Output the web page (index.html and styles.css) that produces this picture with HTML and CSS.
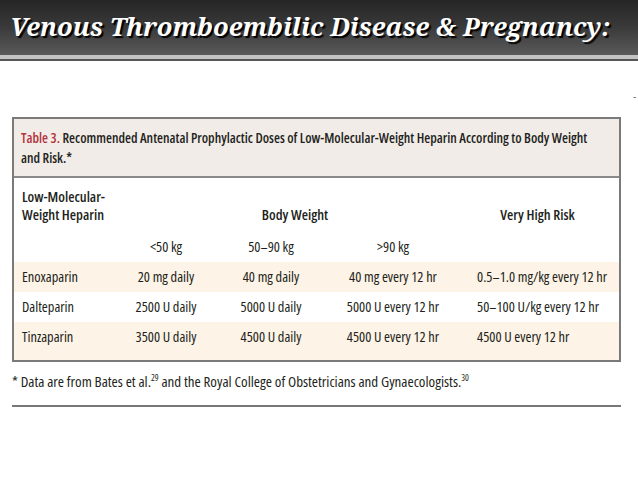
FILE: index.html
```html
<!DOCTYPE html>
<html>
<head>
<meta charset="utf-8">
<link rel="stylesheet" href="styles.css">
</head>
<body>
<header class="banner">
  <h1 class="banner-title">Venous Thromboembilic Disease &amp; Pregnancy:</h1>
</header>
<div class="banner-rule"></div>
<main class="slide">
  <span class="corner-mark">-</span>
  <section class="table-box">
    <div class="table-caption"><span class="caption-num">Table 3.</span> Recommended Antenatal Prophylactic Doses of Low-Molecular-Weight Heparin According to Body Weight<br>and Risk.*</div>
    <table class="dose-table">
      <colgroup>
        <col class="c1"><col class="c2"><col class="c3"><col class="c4"><col class="c5">
      </colgroup>
      <tr class="head1">
        <th class="left">Low-Molecular-<br>Weight Heparin</th>
        <th colspan="3" class="bw">Body Weight</th>
        <th class="vhr">Very High Risk</th>
      </tr>
      <tr class="head2">
        <td></td>
        <td>&lt;50 kg</td>
        <td>50–90 kg</td>
        <td>&gt;90 kg</td>
        <td></td>
      </tr>
      <tr class="row shade">
        <td class="left">Enoxaparin</td>
        <td>20 mg daily</td>
        <td>40 mg daily</td>
        <td>40 mg every 12 hr</td>
        <td class="risk">0.5–1.0 mg/kg every 12 hr</td>
      </tr>
      <tr class="row">
        <td class="left">Dalteparin</td>
        <td>2500 U daily</td>
        <td>5000 U daily</td>
        <td>5000 U every 12 hr</td>
        <td class="risk">50–100 U/kg every 12 hr</td>
      </tr>
      <tr class="row shade last">
        <td class="left">Tinzaparin</td>
        <td>3500 U daily</td>
        <td>4500 U daily</td>
        <td>4500 U every 12 hr</td>
        <td class="risk">4500 U every 12 hr</td>
      </tr>
    </table>
  </section>
  <p class="footnote">* Data are from Bates et al.<sup>29</sup> and the Royal College of Obstetricians and Gynaecologists.<sup>30</sup></p>
  <div class="end-rule"></div>
</main>
</body>
</html>
```
FILE: styles.css
```css
html, body {
  margin: 0;
  padding: 0;
  background: #ffffff;
}
body {
  width: 638px;
  height: 479px;
  overflow: hidden;
}
.banner {
  height: 55px;
  box-sizing: border-box;
  background: linear-gradient(to bottom, #252525 0%, #3a3a3a 50%, #5a5a5a 100%);
  display: flex;
  align-items: center;
  padding: 0 0 4px 10px;
}
.banner-title {
  margin: 0;
  color: #ffffff;
  font-family: "Noto Serif", "DejaVu Serif", serif;
  font-weight: bold;
  font-style: italic;
  font-size: 25.5px;
  line-height: 30px;
  text-shadow: 2px 2px 1px #000000;
  white-space: nowrap;
}
.banner-rule {
  height: 4px;
  background: #c4c4c4;
  border-bottom: 2px solid #555555;
}
.slide {
  position: relative;
  padding: 56px 17px 0 12px;
  font-family: "Open Sans", "Liberation Sans", sans-serif;
  font-stretch: 75%;
  color: #231f20;
}
.corner-mark {
  position: absolute;
  right: 2px;
  top: 28px;
  font-size: 10px;
  color: #555;
}
.table-box {
  border: 2px solid #7a7a7a;
}
.table-caption {
  background: #f2ece8;
  border-bottom: 2px solid #8a8a8a;
  padding: 9px 8px 8px 7px;
  font-size: 13.7px;
  line-height: 20px;
  font-weight: 600;
  white-space: nowrap;
}
.caption-num {
  color: #b5333d;
}
.dose-table {
  width: 605px;
  border-collapse: collapse;
  table-layout: fixed;
  font-size: 14.4px;
}
.c1 { width: 106px; }
.c2 { width: 92px; }
.c3 { width: 118px; }
.c4 { width: 126px; }
.c5 { width: 163px; }
.dose-table th,
.dose-table td {
  padding: 0;
  text-align: center;
  white-space: nowrap;
}
.dose-table .left {
  text-align: left;
  padding-left: 8px;
}
.head1 th {
  font-weight: 600;
  line-height: 18px;
  vertical-align: bottom;
  padding-top: 10px;
}
.head1 .bw {
  padding-left: 14px;
}
.head2 td {
  line-height: 20px;
  padding-top: 13px;
  padding-bottom: 5px;
}
.row td {
  line-height: 30px;
}
.row.shade {
  background: #fdf3e6;
}
.row.last td {
  padding-bottom: 8px;
}
.dose-table .risk {
  text-align: left;
  padding-left: 21px;
}
.footnote {
  margin: 9px 0 0 0;
  font-size: 15px;
  line-height: 20px;
}
.footnote sup {
  font-size: 9px;
  line-height: 0;
}
.end-rule {
  margin-top: 14px;
  height: 2px;
  background: #777777;
}
```
